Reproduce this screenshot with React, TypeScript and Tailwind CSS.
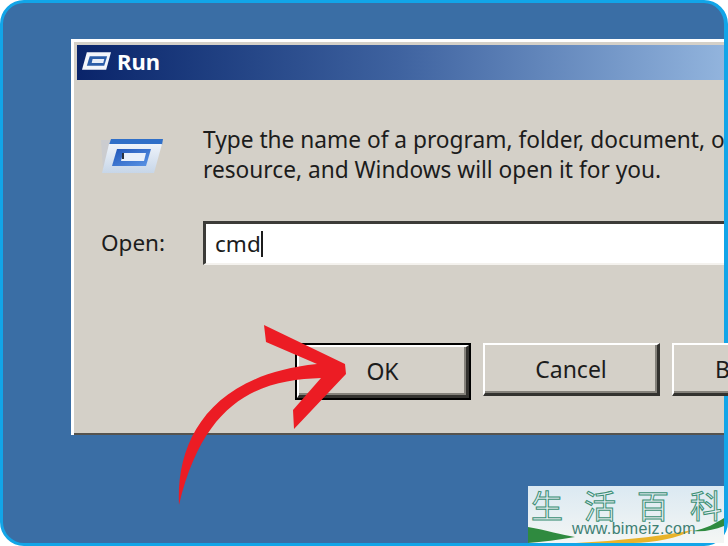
import React from "react";

const RunIcon = ({ className }: { className?: string }) => (
  <svg viewBox="0 0 62 36" className={className}>
    <defs>
      <linearGradient id="runBody" x1="0" y1="0" x2="0" y2="1">
        <stop offset="0" stopColor="#eef3fa" />
        <stop offset="1" stopColor="#c7d6e8" />
      </linearGradient>
      <linearGradient id="runInner" x1="0" y1="0" x2="1" y2="1">
        <stop offset="0" stopColor="#1f55b8" />
        <stop offset="1" stopColor="#5b95e6" />
      </linearGradient>
    </defs>
    <polygon points="0,2 22,2 12,30 2,30" fill="#c4cad4" opacity="0.6" />
    <polygon points="10,1 62,1 61,7 8,7" fill="#2f6fc8" />
    <polygon points="8,6 61,6 53,35 1,35" fill="url(#runBody)" />
    <polygon points="16,11 50,11 45,28 11,28" fill="url(#runInner)" />
    <polygon points="22,15 45,15 43,23 20,23" fill="#e8f0fb" />
    <rect x="21" y="15" width="2" height="6" fill="#27303f" />
  </svg>
);

const SmallRunIcon = ({ className }: { className?: string }) => (
  <svg viewBox="0 0 30 18" className={className}>
    <polygon points="5,0 30,0 25,18 0,18" fill="#f3f6fb" />
    <polygon points="8,4 26,4 23,14 5,14" fill="#2b5da8" />
    <polygon points="11,7 23,7 22,11 10,11" fill="#e8eef8" />
  </svg>
);

const Btn = ({ label, cls }: { label: string; cls: string }) => (
  <div
    className={`h-[53px] shrink-0 flex items-center justify-center text-[23px] text-[#1c1c1c] bg-[#d4d0c8] border-t-2 border-l-2 border-t-white border-l-white border-r-[3px] border-b-[3px] border-r-[#33322f] border-b-[#33322f] shadow-[inset_-2px_-2px_0_#85827b] ${cls}`}
  >
    {label}
  </div>
);

export default function App() {
  return (
    <div className="relative w-[728px] h-[546px] overflow-hidden bg-white font-['Noto_Sans',sans-serif]">
      <div className="w-full h-full rounded-[24px] border-t-[3px] border-l-[3px] border-r-[4px] border-b-[3px] border-[#12a5e8] bg-[#3a6ea5] pt-[36px] pl-[68px]">
        <div className="h-[396px] border-t-[3px] border-l-[3px] border-white bg-[#d4d0c8] pt-[3px] pl-[3px] shadow-[inset_0_-2px_0_#55534e] flex flex-col">
          <div className="h-[35px] shrink-0 flex items-center gap-[6px] pl-[5px] pb-[4px] bg-gradient-to-r from-[#0a246a] via-[#3f63a0] to-[#92b4dd]">
            <SmallRunIcon className="w-[29px] h-[18px]" />
            <span className="text-[22px] font-bold text-white leading-none">Run</span>
          </div>
          <div className="flex pl-[24px] pt-[47px] gap-[40px] h-[105px] shrink-0 overflow-hidden">
            <RunIcon className="w-[62px] h-[36px] mt-[11px] shrink-0" />
            <div className="text-[22.7px] leading-[30px] text-[#1c1c1c] whitespace-nowrap -mt-[2px]">
              <div>Type the name of a program, folder, document, or</div>
              <div>resource, and Windows will open it for you.</div>
            </div>
          </div>
          <div className="flex items-center mt-[36px] pl-[24px] gap-[38px]">
            <span className="text-[22.5px] text-[#1c1c1c]">Open:</span>
            <div className="flex-1 h-[44px] flex items-center bg-white border-t-[3px] border-l-[3px] border-t-[#3c3b38] border-l-[#3c3b38] border-b-2 border-b-[#f4f2ee] pl-[9px] text-[22.5px] text-[#1c1c1c]">
              cmd<span className="inline-block w-[2px] h-[26px] bg-[#1c1c1c]" />
            </div>
          </div>
          <div className="flex mt-[78px] pl-[218px] gap-[12px]">
            <div className="border-[2px] border-black shrink-0">
              <Btn label="OK" cls="w-[172px] h-[50px]" />
            </div>
            <Btn label="Cancel" cls="w-[177px]" />
            <Btn label="B" cls="flex-1 justify-start pl-[41px] border-r-0" />
          </div>
        </div>
      </div>

      <svg className="absolute inset-0 w-[728px] h-[546px]" viewBox="0 0 728 546">
        <path
          d="M264 325 L345 364 L346 374 L294 429 L293 410 L321 378 C265 380 205 395 179 505 C176 440 210 375 317 364 L266 342 Z"
          fill="#ec1c24"
        />
      </svg>

      <div className="absolute left-[528px] top-[486px] w-[196px] h-[57px] overflow-hidden bg-gradient-to-b from-[#dbe9f2] to-[#f4f6f4]">
        <div className="flex gap-[21px] pl-[3px] pt-[2px] text-[32px] leading-[32px] text-transparent [-webkit-text-stroke:1px_#3b8f74] font-['Noto_Sans_CJK_SC',sans-serif]">
          <span>生</span>
          <span>活</span>
          <span>百</span>
          <span>科</span>
        </div>
        <svg className="absolute left-0 top-0 w-[196px] h-[57px]" viewBox="0 0 196 57">
          <path d="M0 41 C18 44 34 49 47 51 C30 54 14 56 0 57 Z" fill="#2f8a3f" />
          <path d="M48 57 C90 55 135 50 165 44 C150 52 125 57 105 57 Z" fill="#e8b32a" />
          <path d="M165 45 C178 43 188 37 196 32 L196 40 C186 44 176 46 165 45 Z" fill="#2f8a3f" />
        </svg>
        <div className="absolute left-[44px] top-[34px] text-[16px] leading-[18px] tracking-[0.35px] text-[#3e7f73] font-['Liberation_Sans',sans-serif]">
          www.bimeiz.com
        </div>
      </div>
    </div>
  );
}
